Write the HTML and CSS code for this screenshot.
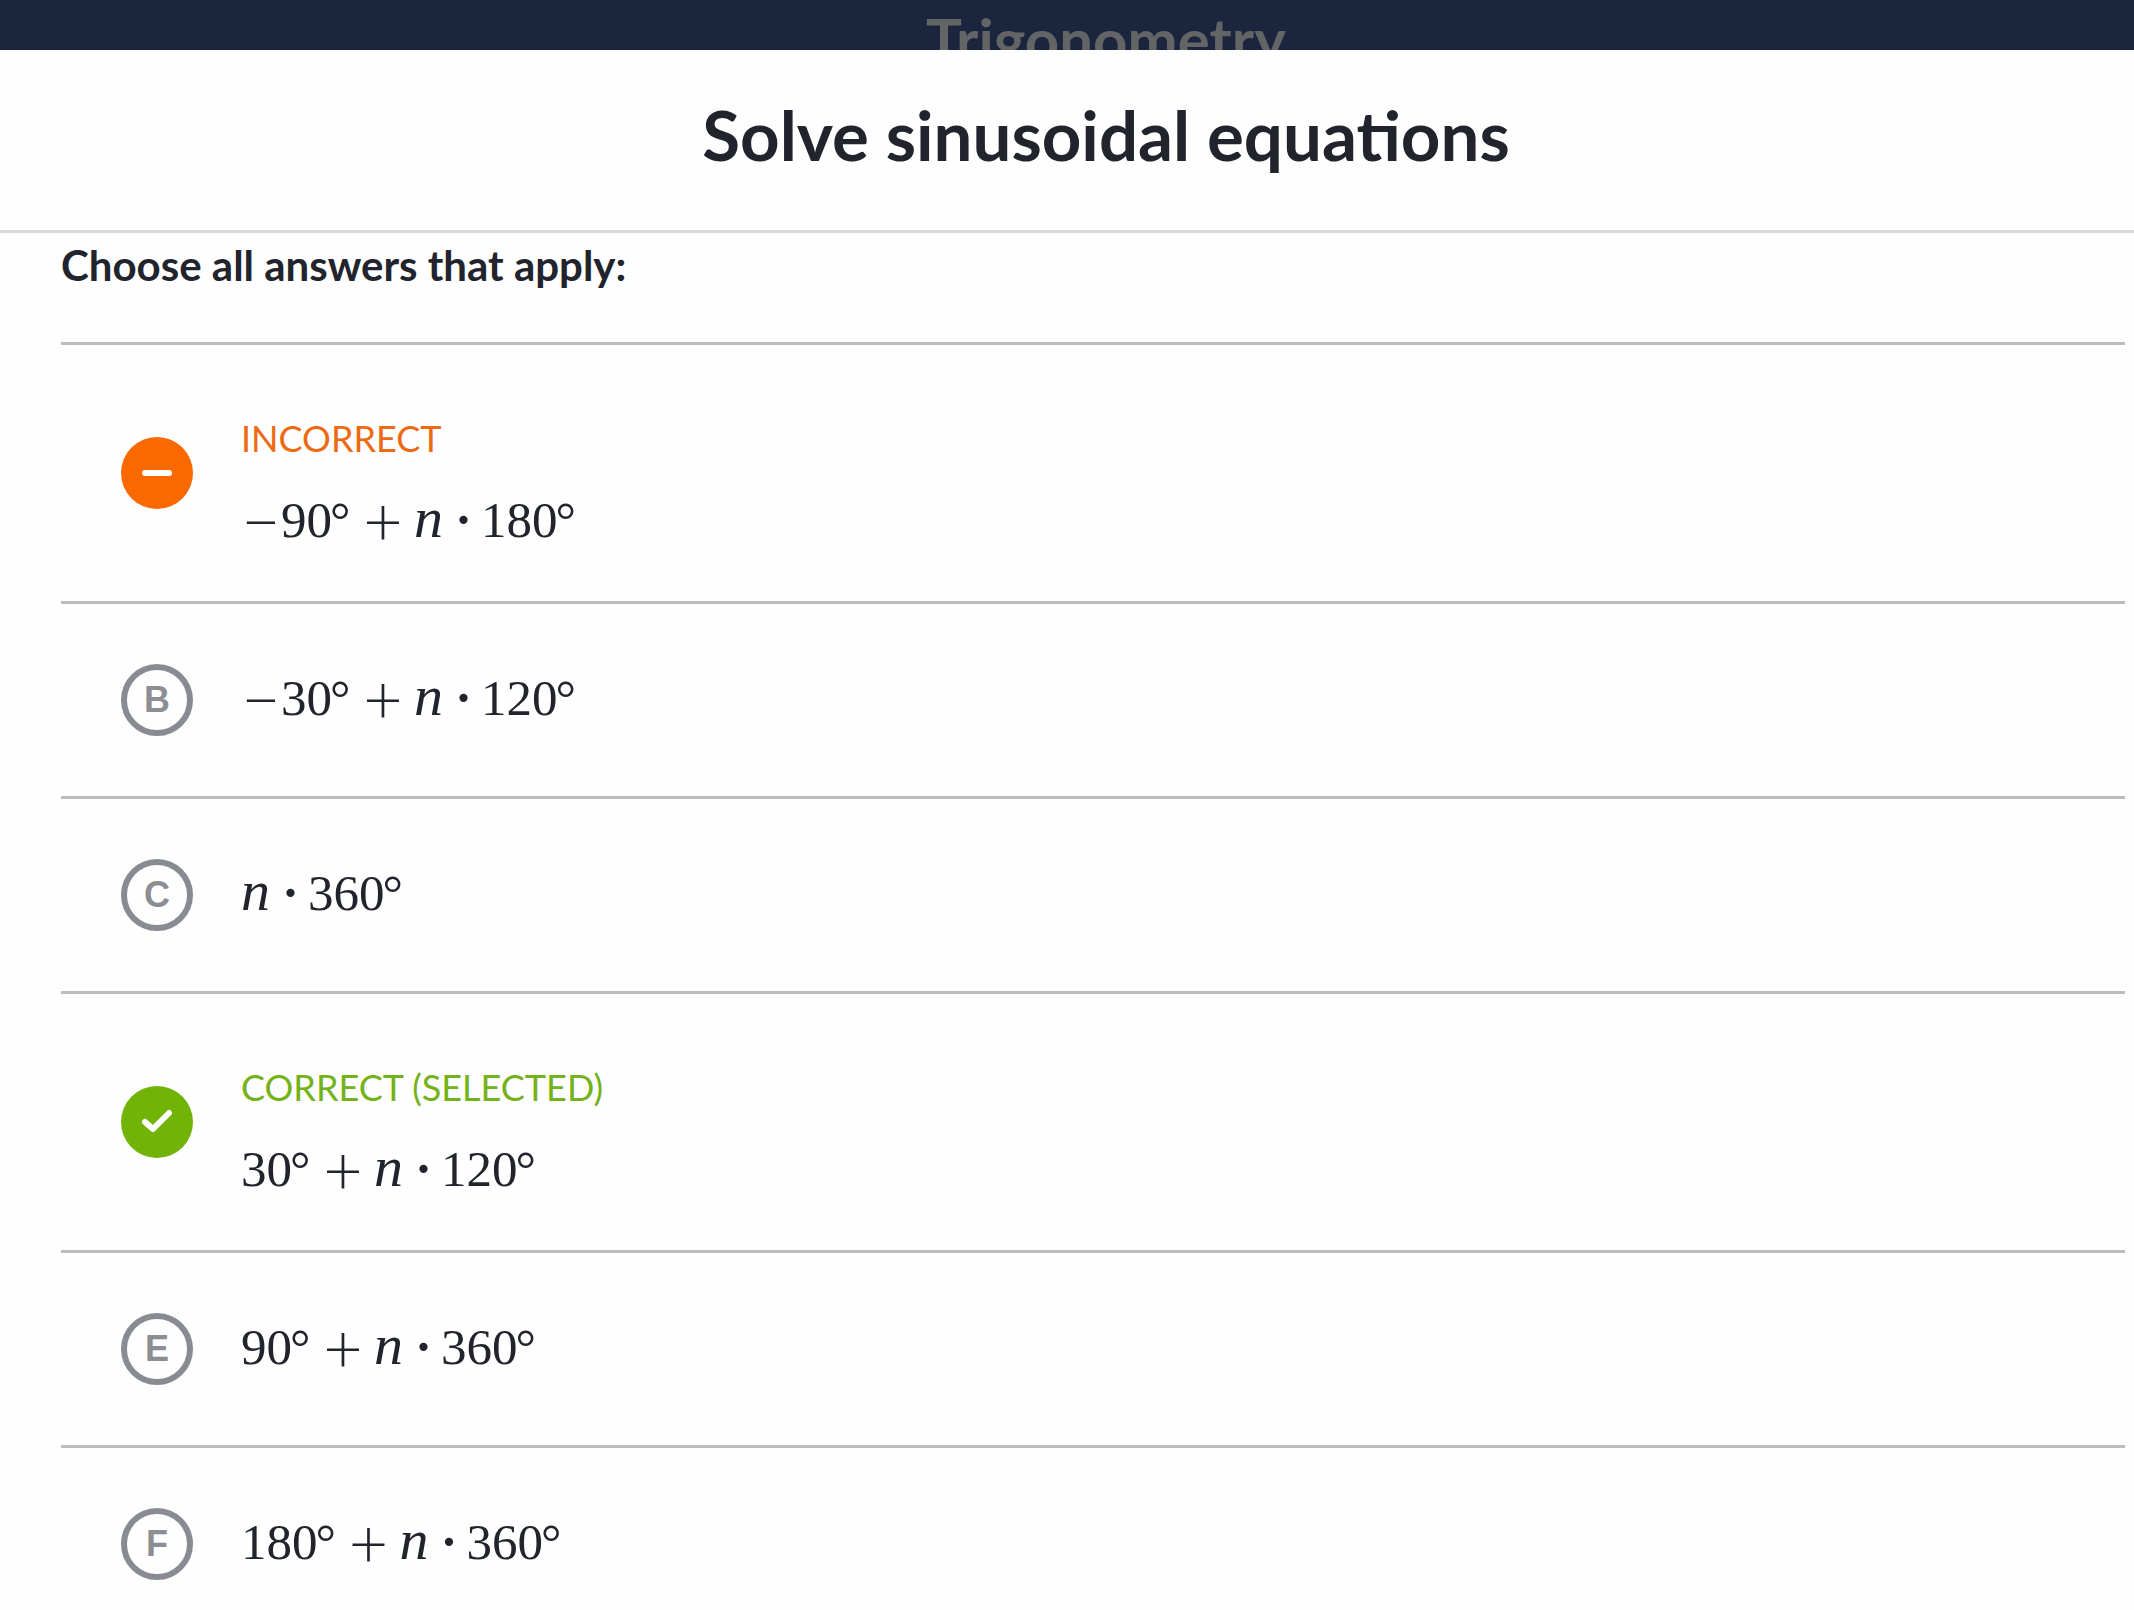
FILE: index.html
```html
<!DOCTYPE html>
<html lang="en">
<head>
<meta charset="utf-8">
<title>Solve sinusoidal equations</title>
<link rel="stylesheet" href="styles.css">
</head>
<body>
<div class="backdrop"><p class="course">Trigonometry</p></div>
<main class="modal">
  <header class="modal-header"><h1 class="title">Solve sinusoidal equations</h1></header>
  <form class="exercise">
    <fieldset class="choices">
      <legend class="prompt">Choose all answers that apply:</legend>
      <ul class="list">
        <li class="row">
          <span class="marker">
            <input class="box box-wrong" type="checkbox" id="a" checked>
            <svg class="icon" viewBox="0 0 72 72" aria-hidden="true"><path d="M24 36H48"/></svg>
          </span>
          <label class="answer answer-graded" for="a">
            <span class="status status-wrong">INCORRECT</span>
            <span class="math"><span class="op">−</span><span>90</span><span class="deg">°</span><span class="op bin">+</span><span class="var">n</span><span class="dot">·</span><span>180</span><span class="deg">°</span></span>
          </label>
        </li>
        <li class="row">
          <span class="marker"><input class="box" type="checkbox" id="b"><span class="letter">B</span></span>
          <label class="answer" for="b">
            <span class="math"><span class="op">−</span><span>30</span><span class="deg">°</span><span class="op bin">+</span><span class="var">n</span><span class="dot">·</span><span>120</span><span class="deg">°</span></span>
          </label>
        </li>
        <li class="row">
          <span class="marker"><input class="box" type="checkbox" id="c"><span class="letter">C</span></span>
          <label class="answer" for="c">
            <span class="math"><span class="var">n</span><span class="dot">·</span><span>360</span><span class="deg">°</span></span>
          </label>
        </li>
        <li class="row">
          <span class="marker">
            <input class="box box-right" type="checkbox" id="d" checked>
            <svg class="icon" viewBox="0 0 72 72" aria-hidden="true"><path d="M24 36L32 43L48 27"/></svg>
          </span>
          <label class="answer answer-graded" for="d">
            <span class="status status-right">CORRECT (SELECTED)</span>
            <span class="math"><span>30</span><span class="deg">°</span><span class="op bin">+</span><span class="var">n</span><span class="dot">·</span><span>120</span><span class="deg">°</span></span>
          </label>
        </li>
        <li class="row">
          <span class="marker"><input class="box" type="checkbox" id="e"><span class="letter">E</span></span>
          <label class="answer" for="e">
            <span class="math"><span>90</span><span class="deg">°</span><span class="op bin">+</span><span class="var">n</span><span class="dot">·</span><span>360</span><span class="deg">°</span></span>
          </label>
        </li>
        <li class="row">
          <span class="marker"><input class="box" type="checkbox" id="f"><span class="letter">F</span></span>
          <label class="answer" for="f">
            <span class="math"><span>180</span><span class="deg">°</span><span class="op bin">+</span><span class="var">n</span><span class="dot">·</span><span>360</span><span class="deg">°</span></span>
          </label>
        </li>
      </ul>
    </fieldset>
  </form>
</main>
</body>
</html>
```
FILE: styles.css
```css
* { box-sizing: border-box; }

body {
  margin: 0;
  height: 100vh;
  display: flex;
  flex-direction: column;
  background: #1b253d;
  color: #21242c;
  font-family: Lato, "Liberation Sans", sans-serif;
}

.backdrop {
  flex: 0 0 50px;
  overflow: hidden;
  padding: 4px 0 0 78px;
  text-align: center;
}

.course {
  margin: 0;
  color: #636466;
  font-size: 60px;
  font-weight: 700;
  line-height: 70px;
}

.modal {
  flex: 1;
  min-height: 0;
  display: flex;
  flex-direction: column;
  background: #fefefe;
}

.modal-header {
  padding: 45px 0 55px 78px;
  border-bottom: 3px solid #d8d9da;
  text-align: center;
}

.title {
  margin: 0;
  font-size: 69px;
  font-weight: 700;
  line-height: 80px;
}

/* The answers scroll below the fixed heading. */
.exercise {
  flex: 1;
  min-height: 0;
  overflow-y: auto;
  scrollbar-width: none;
  padding: 8px 9px 0 61px;
}

.choices { margin: 0; padding: 0; border: 0; min-width: 0; }

.prompt {
  padding: 0;
  margin-bottom: 53px;
  font-size: 42px;
  font-weight: 700;
  line-height: 48px;
}

.list {
  margin: 0;
  padding: 0;
  list-style: none;
  border-top: 3px solid #babcc2;
}

.row {
  display: flex;
  align-items: center;
  gap: 48px;
  min-height: 195px;
  padding: 47px 60px;
  border-bottom: 3px solid #babcbf;
}

.marker { display: grid; place-items: center; flex: none; }
.marker > * { grid-area: 1 / 1; }

.box {
  appearance: none;
  width: 72px;
  height: 72px;
  margin: 0;
  border: 6px solid #888b92;
  border-radius: 50%;
}
.box-wrong { border: 0; background: #fa6800; }
.box-right { border: 0; background: #71b307; }

.letter {
  pointer-events: none;
  color: #8c8e94;
  font-family: "Liberation Sans", sans-serif;
  font-size: 36px;
  font-weight: 700;
  line-height: 40px;
}

.icon {
  pointer-events: none;
  width: 72px;
  height: 72px;
  fill: none;
  stroke: #fff;
  stroke-width: 6;
  stroke-linecap: round;
  stroke-linejoin: round;
}

.answer {
  display: flex;
  flex-direction: column;
  gap: 30px;
  padding-bottom: 4px;
}
.answer-graded { padding-top: 24px; }

.status { font-size: 36px; line-height: 44px; }
.status-wrong { color: #ec6a13; }
.status-right { color: #74b21a; }

.math {
  display: flex;
  align-items: baseline;
  height: 60px;
  font-family: "Liberation Serif", serif;
  font-size: 51px;
  line-height: 60px;
}

/* Operators sit on the math axis, centred in the line. */
.op {
  display: flex;
  justify-content: center;
  align-self: center;
  width: 40px;
  font-family: Lato, sans-serif;
  font-size: 68px;
  font-weight: 300;
}
.bin { margin: 0 11px; }
.deg { width: 20px; margin: 0 2px 0 -2px; }
.var { width: 30px; font-style: italic; font-size: 58px; line-height: 0; }
.dot { width: 14px; margin: 0 12px 0 11px; text-align: center; font-weight: 700; }
```
